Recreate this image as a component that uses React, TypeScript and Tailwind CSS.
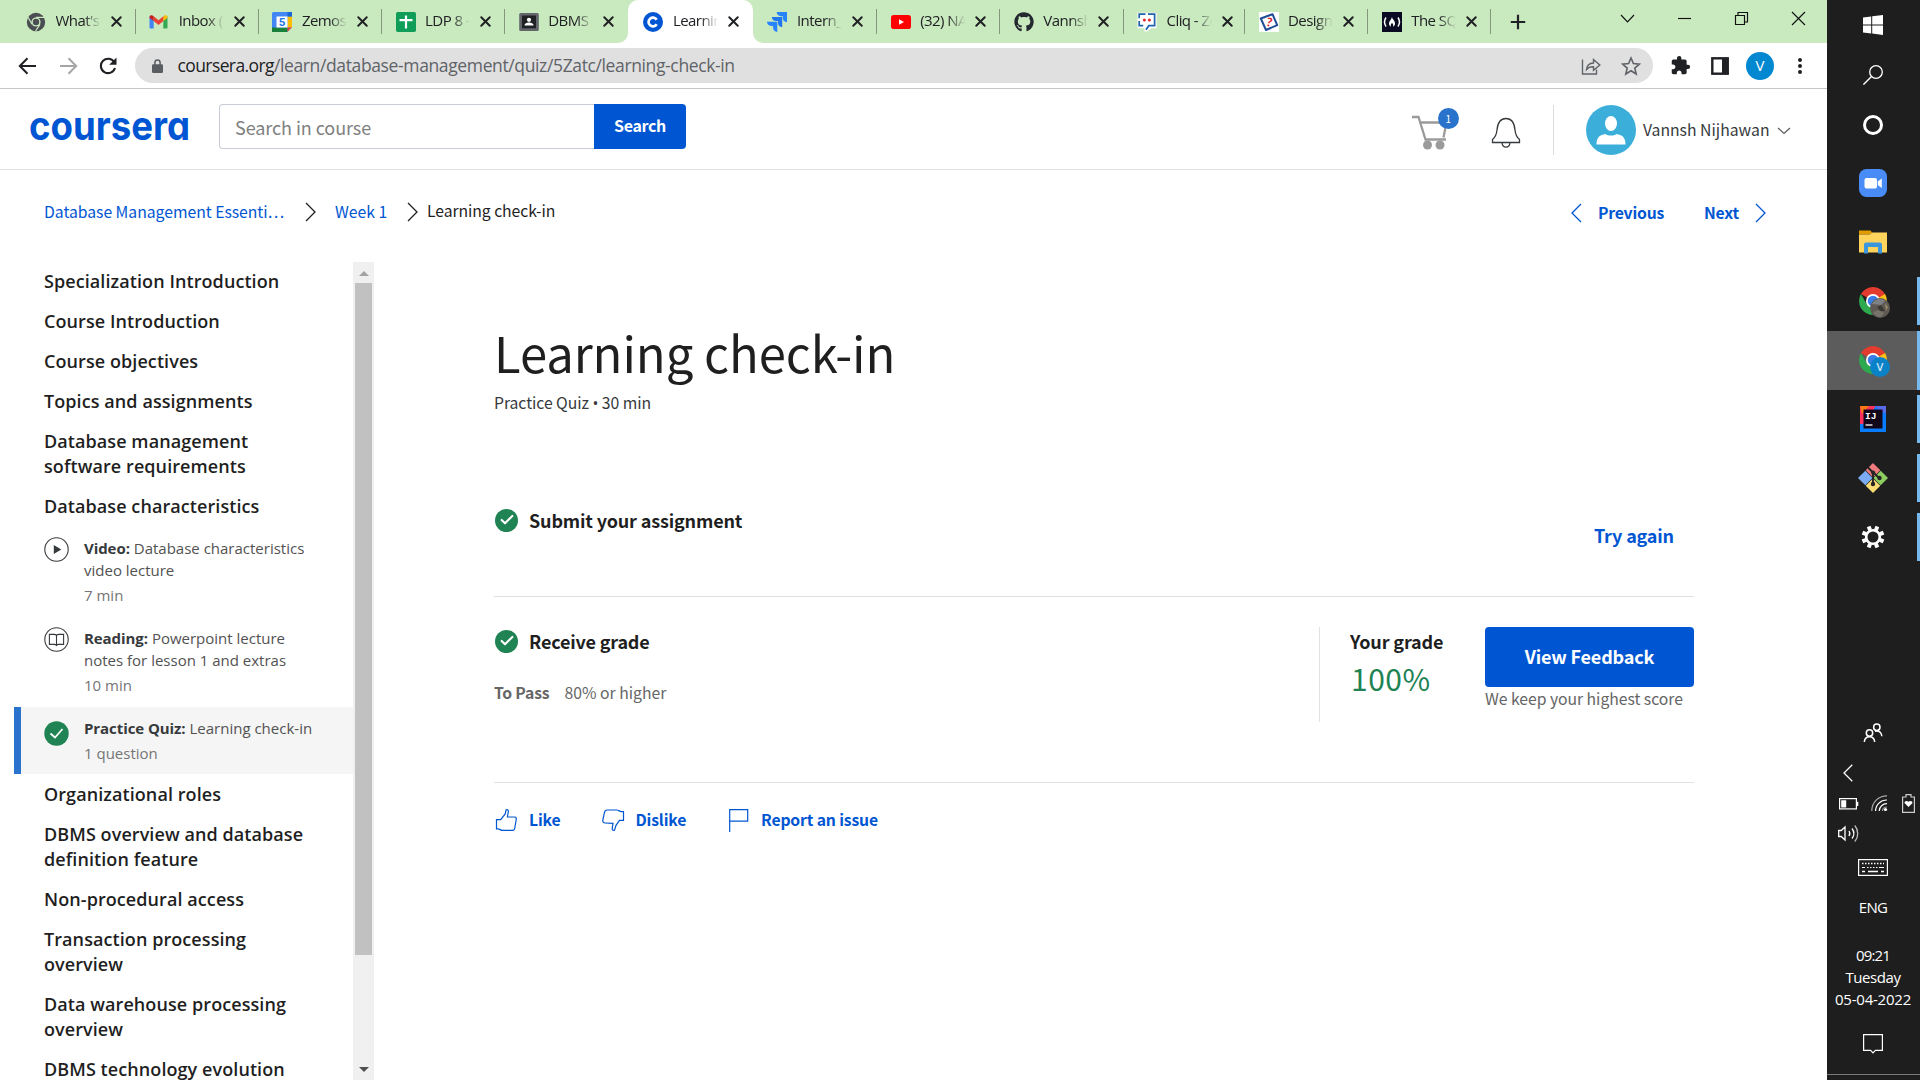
import React from "react";
import { X, Check } from "lucide-react";
import { FaGithub } from "react-icons/fa";
import { MdExtension } from "react-icons/md";

const SOURCE = "font-['Noto_Sans_CJK_SC',sans-serif]";
const SEGOE = "font-['Open_Sans',sans-serif]";

/* ---------- favicons ---------- */

function ChromeGrey() {
  return (
    <svg viewBox="0 0 20 20" className="size-5">
      <circle cx="10" cy="10" r="9.2" fill="#4a4d51" />
      <circle cx="10" cy="10" r="4.6" fill="#c9e9bf" />
      <circle cx="10" cy="10" r="3.2" fill="#4a4d51" />
      <path d="M10 5.4h8.2M6 12.3 2 5.3M14 12.3 9.6 19" stroke="#c9e9bf" strokeWidth="1.2" />
    </svg>
  );
}

function Gmail() {
  return (
    <svg viewBox="0 0 20 20" className="size-5">
      <path d="M.5 4.500v11.200c0 .5.4.8.8.8H4.700V8.600z" fill="#4285f4" />
      <path d="M18.500 4.500v11.200c0 .5-.4.8-.8.8h-3.400V8.600z" fill="#34a853" />
      <path d="M14.300 4.200v4.900l4.200-3.200V5c0-1.600-1.900-2.200-3-1.400z" fill="#fbbc04" />
      <path d="M4.700 9.100V4.200l4.800 4 4.800-4v4.900l-4.800 4z" fill="#ea4335" />
      <path d="M.5 5v.9l4.200 3.200V4.200l-1.200-.7C2.400 2.800.5 3.400.5 5z" fill="#c5221f" />
    </svg>
  );
}

function Calendar() {
  return (
    <svg viewBox="0 0 20 20" className="size-5">
      <rect width="20" height="20" rx="1.500" fill="#4285f4" />
      <rect x="15.500" y="4.500" width="4.500" height="11" fill="#fbbc04" />
      <rect x="0" y="15.500" width="15.500" height="4.500" fill="#188038" />
      <rect x="15.500" y="0" width="4.500" height="4.500" fill="#1967d2" />
      <path d="M15.500 15.500H20L15.500 20z" fill="#ea4335" />
      <path d="M20 15.500V20h-4.500z" fill="#c9e9bf" />
      <rect x="4.500" y="4.500" width="11" height="11" fill="#fff" />
      <text x="10" y="14.300" textAnchor="middle" fontSize="11.500" fontWeight="700" fill="#1a73e8" fontFamily="Roboto">5</text>
    </svg>
  );
}

function Sheets() {
  return (
    <svg viewBox="0 0 20 20" className="size-5">
      <rect width="20" height="20" rx="1.800" fill="#0f9d58" />
      <path d="M10 3.500v13M3.500 8.200h13" stroke="#fff" strokeWidth="2.200" />
    </svg>
  );
}

function Classroom() {
  return (
    <svg viewBox="0 0 20 20" className="size-5">
      <rect x=".2" y="1" width="19.600" height="18" rx="1.500" fill="#63666a" />
      <rect x="3" y="3.500" width="14" height="12.800" fill="#202124" />
      <circle cx="10" cy="7.800" r="2.100" fill="#fff" />
      <path d="M5.500 13.500c0-2.300 3-3 4.500-3s4.500.7 4.500 3z" fill="#fff" />
    </svg>
  );
}

function CourseraMark() {
  return (
    <svg viewBox="0 0 20 20" className="size-5">
      <circle cx="10" cy="10" r="10" fill="#0056d2" />
      <path d="M13.700 7.700A4.400 4.400 0 1 0 13.700 12.300" fill="none" stroke="#fff" strokeWidth="2.700" />
    </svg>
  );
}

function Jira() {
  return (
    <svg viewBox="0 0 20 20" className="size-5">
      <path d="M9.700 0H20v10.300c-2.300 0-4.200-1.900-4.200-4.200V4.200h-1.900C11.600 4.200 9.700 2.300 9.700 0z" fill="#2684ff" />
      <path d="M4.900 4.900h10.300v10.300c-2.300 0-4.200-1.900-4.200-4.200V9.100H9.100c-2.300 0-4.200-1.900-4.200-4.200z" fill="#1f76ee" />
      <path d="M0 9.700h10.300V20c-2.300 0-4.200-1.900-4.200-4.200v-1.900H4.200C1.900 13.900 0 12 0 9.700z" fill="#2684ff" />
    </svg>
  );
}

function YouTube() {
  return (
    <svg viewBox="0 0 20 20" className="size-5">
      <rect x="0" y="3" width="20" height="14" rx="2.800" fill="#f00" />
      <path d="M8 7.200v5.600l5-2.800z" fill="#fff" />
    </svg>
  );
}

function Cliq() {
  return (
    <svg viewBox="0 0 20 20" className="size-5">
      <path d="M.5.800h19v15.400h-5.300L10 19.500H7.500v-3.300h-7z" fill="#fff" />
      <path d="M8.500 2.200H2.200v4M2.200 9v4.700h4M11 2.200h6.600v11.500h-5.800L9 17.800" fill="none" stroke="#1d63b0" strokeWidth="1.700" />
      <circle cx="7.400" cy="8" r="1.500" fill="#e42527" />
      <circle cx="12.400" cy="8" r="1.500" fill="#e42527" />
    </svg>
  );
}

function DesignMark() {
  return (
    <svg viewBox="0 0 20 20" className="size-5">
      <rect width="20" height="20" fill="#fff" />
      <path d="M1.800 6.500 13.500 2.200 18.200 13.200 7 18z" fill="#fff" stroke="#1f4e96" strokeWidth="2" strokeLinejoin="round" />
      <text x="10.300" y="14.300" textAnchor="middle" fontSize="12" fontWeight="900" fill="#e01b2c" fontFamily="Lato" transform="rotate(12 10 10)">?</text>
    </svg>
  );
}

function FreeCodeCamp() {
  return (
    <svg viewBox="0 0 20 20" className="size-5">
      <rect width="20" height="20" fill="#0a0a23" />
      <path d="M4 5.500c-2 3-2 6 0 9M16 5.500c2 3 2 6 0 9" fill="none" stroke="#fff" strokeWidth="1.500" />
      <path d="M10 5c.3 2.500 3 3.500 3 6.500 0 1.700-1 2.800-2 3.200.6-1.300.2-2.700-1-3.700-1.200 1-1.600 2.400-1 3.700-1-.4-2-1.500-2-3.200C7 9 9.200 8 10 5z" fill="#fff" />
    </svg>
  );
}

const tabs: { title: string; icon: React.ReactNode; active?: boolean; narrow?: boolean }[] = [
  { title: "What's N", icon: <ChromeGrey /> },
  { title: "Inbox (1", icon: <Gmail /> },
  { title: "Zemoso", icon: <Calendar /> },
  { title: "LDP 8 - L", icon: <Sheets /> },
  { title: "DBMS", icon: <Classroom /> },
  { title: "Learning", icon: <CourseraMark />, active: true },
  { title: "Intern_S", icon: <Jira /> },
  { title: "(32) NAV", icon: <YouTube /> },
  { title: "Vannsh", icon: <FaGithub className="size-5 text-[#24292f]" /> },
  { title: "Cliq - Zo", icon: <Cliq />, narrow: true },
  { title: "Design", icon: <DesignMark /> },
  { title: "The SQL", icon: <FreeCodeCamp /> },
];

function TabStrip() {
  return (
    <div className="flex h-[43px] shrink-0 bg-[#c9e9bf] pl-[11.5px] text-[#202124]">
      {tabs.map((t, i) => {
        const sep = i > 0 && !t.active && !tabs[i - 1].active;
        return (
          <div
            key={t.title}
            className={
              "relative flex shrink-0 items-center " +
              (t.active ? "ml-px w-[124.500px] rounded-t-[10px] bg-white pl-[15px]" : t.narrow ? "w-[121.500px] pl-[14.500px]" : "w-[123.200px] pl-[14.500px]")
            }
          >
            {sep && <span className="absolute left-0 top-[9px] h-[25px] w-px bg-[#83977d]" />}
            {t.active && (
              <>
                <svg viewBox="0 0 10 10" className="absolute -left-[10px] bottom-0 size-[10px]"><path d="M10 0v10H0A10 10 0 0 0 10 0z" fill="#fff" /></svg>
                <svg viewBox="0 0 10 10" className="absolute -right-[10px] bottom-0 size-[10px]"><path d="M0 0v10h10A10 10 0 0 1 0 0z" fill="#fff" /></svg>
              </>
            )}
            <span className="size-5 shrink-0">{t.icon}</span>
            <span className="ml-[9.500px] w-[45px] overflow-hidden whitespace-nowrap pb-[3px] text-[15px] leading-[20px] tracking-[-0.550px] [mask-image:linear-gradient(to_right,black_62%,transparent)]">
              {t.title}
            </span>
            <X className="ml-[7px] size-[17px] shrink-0" strokeWidth={2.8} />
          </div>
        );
      })}
      <div className="flex items-center">
        <span className="h-[25px] w-px bg-[#83977d]" />
        <svg viewBox="0 0 16 16" className="ml-[19px] size-4"><path d="M8 .8v14.400M.8 8h14.400" stroke="#202124" strokeWidth="2.200" /></svg>
      </div>
      <div className="ml-auto flex h-[37px] items-center">
        {[
          "M1 4l6.500 7L14 4",
          "M1 7.500h13",
          "M1.500 4.500h9v9h-9zM4 4.500v-3h9.500v9.500h-3",
          "M1 1l13 13M14 1L1 14",
        ].map((d) => (
          <span key={d} className="flex w-[57px] justify-center">
            <svg viewBox="0 0 15 15" className="size-[15px]"><path d={d} fill="none" stroke="#111" strokeWidth="1.150" /></svg>
          </span>
        ))}
      </div>
    </div>
  );
}

function Toolbar() {
  return (
    <div className="flex h-[46px] shrink-0 items-center border-b border-[#c6c6c6] bg-white px-[18px] text-[#202124]">
      <svg viewBox="0 0 19 18" className="h-[18px] w-[19px]"><path d="M18 9H2M9.500 1.200 1.800 9l7.700 7.800" fill="none" stroke="#202124" strokeWidth="2" /></svg>
      <svg viewBox="0 0 19 18" className="ml-[22px] h-[18px] w-[19px]"><path d="M1 9h16M9.500 1.200 17.200 9l-7.700 7.800" fill="none" stroke="#a5a6a8" strokeWidth="2" /></svg>
      <svg viewBox="0 0 18 18" className="ml-[21px] size-[18px]"><path d="M15.300 5.200A7.200 7.200 0 1 0 16 11" fill="none" stroke="#202124" strokeWidth="2.100" /><path d="M17.500.5v7.300h-7.300z" fill="#202124" /></svg>
      <div className="ml-[18px] flex h-[35px] w-[1517.500px] items-center rounded-full bg-[#e0e0e0] pl-[17px] pr-[12px]">
        <svg viewBox="0 0 11 14" className="h-[14px] w-[11px]"><path d="M2.900 6V3.600a2.600 2.600 0 0 1 5.200 0V6" fill="none" stroke="#5a5d61" strokeWidth="1.500" /><rect y="5.200" width="11" height="8.800" rx="1.200" fill="#5a5d61" /></svg>
        <span className="ml-[14.500px] whitespace-nowrap pb-px text-[17.500px] leading-6 tracking-[-0.600px]">
          coursera.org<span className="tracking-[-0.370px] text-[#5f6368]">/learn/database-management/quiz/5Zatc/learning-check-in</span>
        </span>
        <svg viewBox="0 0 20 20" className="ml-auto size-5"><path d="M1.500 3.500V18h14v-4.500M1.500 5.500V3.500M5.500 13.500c.4-4.200 2.700-6.300 7-6.500V3.500L18.800 9l-6.300 5.300v-3.500c-3.200-.1-5.300.7-7 2.700z" fill="none" stroke="#5f6368" strokeWidth="1.400" /></svg>
        <svg viewBox="0 0 20 20" className="ml-[20px] size-5"><path d="m10 2 2.400 5.600 6 .5-4.600 4 1.400 5.900L10 14.800 4.800 18l1.400-5.900-4.600-4 6-.5z" fill="none" stroke="#5f6368" strokeWidth="1.600" /></svg>
      </div>
      <MdExtension className="ml-[17.500px] size-[21px]" />
      <svg viewBox="0 0 18 18" className="ml-[20px] size-[18px]"><rect x="1.300" y="1.300" width="15.400" height="15.400" fill="none" stroke="#202124" strokeWidth="2.400" /><rect x="11" y="1" width="6.500" height="16" fill="#202124" /></svg>
      <span className="ml-[17px] flex size-7 items-center justify-center rounded-full bg-[#0288d1] text-[15px] text-white">V</span>
      <svg viewBox="0 0 6 18" className="ml-auto mr-[6px] h-[18px] w-[6px]"><g fill="#202124"><circle cx="3" cy="3" r="2" /><circle cx="3" cy="9" r="2" /><circle cx="3" cy="15" r="2" /></g></svg>
    </div>
  );
}

function SiteHeader() {
  return (
    <header className="flex h-[81px] shrink-0 items-center border-b border-[#e1e1e1] pl-[29px]">
      <svg viewBox="0 0 162 46" className="h-[46px] w-[162px]" role="img" aria-label="coursera">
        <text x="0" y="34" textLength="161" lengthAdjust="spacingAndGlyphs" fontFamily="Inter" fontSize="40" fontWeight="700" fill="#0056d2" style={{ fontFeatureSettings: '"cv11"' }}>coursera</text>
      </svg>
      <div className="mb-[5px] ml-[28px] flex h-[45px]">
        <div className="flex w-[375px] items-center rounded-l-[4px] border border-r-0 border-[#c7ccd8] pl-[15px] text-[18px] leading-none tracking-[-0.080px] text-[#808080]">
          Search in course
        </div>
        <div className="flex w-[92px] items-center justify-center rounded-r-[4px] bg-[#0056d2] pb-[3px] text-[16px] font-bold leading-none tracking-[-0.330px] text-white">
          Search
        </div>
      </div>
      <div className="relative mb-[5px] ml-auto h-[46px] w-[38px]">
        <svg viewBox="0 0 38 46" className="h-full w-full">
          <path d="M0 13h6.500L13.500 35.500H34M8.500 18.500h26l-3 15" fill="none" stroke="#9b9b9b" strokeWidth="2.300" />
          <circle cx="15.500" cy="41" r="4.500" fill="#9b9b9b" /><circle cx="28" cy="41" r="4.500" fill="#9b9b9b" />
        </svg>
        <span className="absolute -right-[9px] top-[4px] flex size-[21px] items-center justify-center rounded-full bg-[#2a73cc] text-[10px] text-white">1</span>
      </div>
      <svg viewBox="0 0 30 32" className="ml-[41px] mt-[8px] h-8 w-[30px]"><path d="M1.500 25.500v-3c3-2.300 4-4.800 4.500-9.500C6.600 6 9 1.500 15 1.500S23.400 6 24 13c.5 4.700 1.500 7.200 4.500 9.500v3zM11 25.800c.3 2.800 1.800 4.400 4 4.400s3.700-1.600 4-4.400" fill="none" stroke="#373a3c" strokeWidth="1.300" /></svg>
      <span className="ml-[32px] mt-px h-[50px] w-px bg-[#dcdcdc]" />
      <svg viewBox="0 0 50 50" className="ml-[32px] mt-px size-[50px]">
        <circle cx="25" cy="25" r="25" fill="#3bafda" />
        <ellipse cx="25" cy="18.500" rx="6" ry="7.500" fill="#fff" />
        <path d="M10.500 39.500c0-7.500 3.500-9.500 9-10.500 2.500 2 8.500 2 11 0 5.500 1 9 3 9 10.500z" fill="#fff" />
      </svg>
      <span className="ml-[7px] mt-px text-[15.750px] leading-none text-[#373a3c]">Vannsh Nijhawan</span>
      <svg viewBox="0 0 14 8" className="ml-[7.500px] mr-[36px] mt-[3px] h-2 w-[14px]"><path d="m1 1 6 5.500L13 1" fill="none" stroke="#5a5a5a" strokeWidth="1.200" /></svg>
    </header>
  );
}

function Chevron({ flip, className }: { flip?: boolean; className: string }) {
  return (
    <svg viewBox="0 0 11 20" className={"h-5 w-[11px] " + className}>
      <path d={flip ? "M10 1 1 10l9 9" : "m1 1 9 9-9 9"} fill="none" stroke="currentColor" strokeWidth="1.300" />
    </svg>
  );
}

function Breadcrumbs() {
  return (
    <nav className="flex h-[92px] shrink-0 items-center pb-[9px] pl-11 text-[15.750px] leading-none text-[#1f1f1f]">
      <span className="w-[241px] whitespace-nowrap tracking-[-0.030px] text-[#0056d2]">Database Management Essenti…</span>
      <Chevron className="ml-[20px]" />
      <span className="ml-[19px] w-[53px] whitespace-nowrap text-[#0056d2]">Week 1</span>
      <Chevron className="ml-[19px]" />
      <span className="ml-[9px] whitespace-nowrap pb-[2px] tracking-[-0.070px]">Learning check-in</span>
      <div className="ml-auto flex items-center pr-[61.500px] pt-[2px] font-bold tracking-[-0.220px] text-[#0056d2]">
        <Chevron flip className="" />
        <span className="ml-[16px] w-[66px]">Previous</span>
        <span className="ml-[40px] w-[36px]">Next</span>
        <Chevron className="ml-[14.500px]" />
      </div>
    </nav>
  );
}

function Section({ children }: { children: React.ReactNode }) {
  return <div className="px-[30px] py-[7.500px] text-[18px] font-semibold leading-[25px] tracking-[0.080px] text-[#1f1f1f]">{children}</div>;
}

function Lesson({ icon, kind, name, meta, active }: { icon: React.ReactNode; kind: string; name: React.ReactNode; meta: string; active?: boolean }) {
  return (
    <div className={"flex border-l-[7px] pl-[23px] text-[15px] leading-[22px] " + (active ? "h-[67px] border-[#2a73cc] bg-[#f5f5f5] pt-[10px]" : "h-[90px] border-transparent pt-[11px]")}>
      <span className={"size-[25px] shrink-0 " + (active ? "mt-[4px]" : "")}>{icon}</span>
      <div className="ml-[15px]">
        <div className="whitespace-nowrap text-[#525252]"><b className="font-bold tracking-[-0.070px] text-[#373a3c]">{kind}:</b> {name}</div>
        <div className="pt-[3px] text-[#757575]">{meta}</div>
      </div>
    </div>
  );
}

function Sidebar() {
  return (
    <aside className="flex w-[374px] shrink-0">
      <div className={"ml-[14px] w-[339px] shrink-0 overflow-hidden " + SEGOE}>
        <div className="-mt-px mb-px h-[265px]">
          <Section>Specialization Introduction</Section>
          <Section>Course Introduction</Section>
          <Section>Course objectives</Section>
          <Section>Topics and assignments</Section>
          <Section>Database management<br />software requirements</Section>
          <Section>Database characteristics</Section>
        </div>
        <div className="-mt-px h-[181px]">
          <Lesson
            kind="Video"
            name={<>Database characteristics<br />video lecture</>}
            meta="7 min"
            icon={<svg viewBox="0 0 25 25" className="size-[25px]"><circle cx="12.500" cy="12.500" r="11.700" fill="none" stroke="#373a3c" strokeWidth="1.100" /><path d="M9.800 8v9l7.500-4.500z" fill="#373a3c" /></svg>}
          />
          <Lesson
            kind="Reading"
            name={<>Powerpoint lecture<br />notes for lesson 1 and extras</>}
            meta="10 min"
            icon={<svg viewBox="0 0 25 25" className="size-[25px]"><circle cx="12.500" cy="12.500" r="11.700" fill="none" stroke="#373a3c" strokeWidth="1.100" /><path d="M12.500 8.300c-.7-.8-1.500-.9-2.500-.9H5.400v10h5c1 0 1.600.3 2.100 1.100.5-.8 1.100-1.100 2.100-1.100h5v-10H15c-1 0-1.800.1-2.500.9zm0 0v10.200" fill="none" stroke="#373a3c" strokeWidth="1.100" /></svg>}
          />
        </div>
        <Lesson
          active
          kind="Practice Quiz"
          name="Learning check-in"
          meta="1 question"
          icon={<svg viewBox="0 0 25 25" className="size-[25px]"><circle cx="12.500" cy="12.500" r="12.200" fill="#1f8354" /><path d="m6.500 12.500 4.500 4 7.500-8.500" fill="none" stroke="#fff" strokeWidth="1.700" /></svg>}
        />
        <Section>Organizational roles</Section>
        <Section>DBMS overview and database<br />definition feature</Section>
        <Section>Non-procedural access</Section>
        <Section>Transaction processing<br />overview</Section>
        <Section>Data warehouse processing<br />overview</Section>
        <Section>DBMS technology evolution</Section>
      </div>
      <div className="flex w-[21px] shrink-0 flex-col items-center bg-[#f0f0f0]">
        <svg viewBox="0 0 10 5" className="mt-[9px] h-[5px] w-[10px] shrink-0"><path d="M5 0 10 5H0z" fill="#a3a3a3" /></svg>
        <span className="mt-[7px] h-[672px] w-[17px] shrink-0 bg-[#c1c1c1]" />
        <svg viewBox="0 0 10 5" className="mb-[8px] mt-auto h-[5px] w-[10px] shrink-0"><path d="M5 5 10 0H0z" fill="#505050" /></svg>
      </div>
    </aside>
  );
}

function Done() {
  return (
    <span className="ml-px flex size-[23px] items-center justify-center rounded-full bg-[#1f8354] text-white">
      <Check className="size-4" strokeWidth={3.2} />
    </span>
  );
}

function Main() {
  return (
    <main className="ml-[120px] w-[1200px]">
      <h1 className="mt-[65px] whitespace-nowrap text-[49px] leading-[50px] tracking-[-0.080px] text-[#1f1f1f]">Learning check-in</h1>
      <p className="mt-[14px] text-[15.750px] leading-6 tracking-[-0.050px] text-[#373a3c]">
        Practice Quiz <span className={SEGOE}>•</span> 30 min
      </p>
      <section className="mt-[89px] flex h-[93px] justify-between border-b border-[#e1e1e1]">
        <div className="flex h-8 items-center gap-[11px]">
          <Done />
          <h2 className="text-[18px] font-bold leading-8 tracking-[-0.160px] text-[#1f1f1f]">Submit your assignment</h2>
        </div>
        <button className="mt-px h-[60px] px-5 text-[18px] font-bold tracking-[-0.160px] text-[#0056d2]">Try again</button>
      </section>
      <section className="flex h-[186px] border-b border-[#e1e1e1] pt-[30px]">
        <div>
          <div className="flex h-[28px] items-center gap-[11px]">
            <Done />
            <h2 className="text-[18px] font-bold leading-[28px] tracking-[-0.180px] text-[#1f1f1f]">Receive grade</h2>
          </div>
          <div className="mt-[26px] flex text-[15.750px] leading-6 text-[#666]">
            <b className="w-[70.500px] tracking-[-0.200px]">To Pass</b>
            <span>80% or higher</span>
          </div>
        </div>
        <div className="ml-auto h-[95px] w-[166px] border-l border-[#e1e1e1] pl-[30px]">
          <h2 className="whitespace-nowrap text-[18px] font-bold leading-[28px] tracking-[-0.150px] text-[#1f1f1f]">Your grade</h2>
          <div className="mt-[3px] pl-px text-[30px] leading-10 tracking-[0.500px] text-[#1f8354]">100%</div>
        </div>
        <div className="w-[209px]">
          <button className="block h-[60px] w-full rounded-[4px] bg-[#0056d2] pb-[2px] text-[18px] font-bold leading-[58px] tracking-[-0.170px] text-white">View Feedback</button>
          <div className="mt-px whitespace-nowrap text-[15.750px] leading-[22px] tracking-[-0.040px] text-[#666]">We keep your highest score</div>
        </div>
      </section>
      <div className="mt-[25px] flex h-6 items-center text-[15.750px] font-bold leading-6 tracking-[-0.160px] text-[#0056d2]">
        <svg viewBox="0 0 24 24" className="size-6"><path d="M2.500 11.700h4.200l4.500-5.800.9-4.100c.8-.6 2.300 0 2.300 1.500l-1 5.700h7.300c1.100 0 1.800.9 1.600 2l-1.500 9c-.2 1.600-.9 2.400-2.300 2.400H8.600c-2 0-2.800-1.500-4.600-1.500H2.500z" fill="none" stroke="currentColor" strokeWidth="1.200" /></svg>
        <span className="ml-[11px] w-[31px]">Like</span>
        <svg viewBox="0 0 24 24" className="ml-[41px] size-6"><path d="M22.500 12.300h-4l-3.500 5-1.500 4.800c-.8.8-2.500 0-2.300-1.400l.8-5.400-7.800-.3c-1.800 0-2.700-1.300-2.400-2.900L3.500 4.300c.4-1.800 1.300-2.300 2.700-2.300h9.200c2.500 0 3 1.600 5 1.600h2.100z" fill="none" stroke="currentColor" strokeWidth="1.200" /></svg>
        <span className="ml-[10.500px] w-[51px]">Dislike</span>
        <svg viewBox="0 0 24 24" className="ml-[38px] size-6"><path d="M4.700 24V1.700h18v11.500h-18" fill="none" stroke="currentColor" strokeWidth="1.200" /></svg>
        <span className="ml-[12.500px] whitespace-nowrap">Report an issue</span>
      </div>
    </main>
  );
}

/* ---------- taskbar ---------- */

function ChromeColor({ badge }: { badge: React.ReactNode }) {
  return (
    <svg viewBox="0 0 32 32" className="ml-[4px] mt-[4px] size-8">
      <path d="M14 7h12.100A14 14 0 0 1 14 28l6-10.500z" fill="#fbc116" />
      <path d="M14 14 1.900 7A14 14 0 0 1 26.100 7z" fill="#e33b2e" />
      <path d="M1.900 7A14 14 0 0 0 14 28l6-10.500-12 0z" fill="#2da94f" />
      <circle cx="14" cy="14" r="7" fill="#fff" />
      <circle cx="14" cy="14" r="5.300" fill="#3b7de8" />
      {badge}
    </svg>
  );
}

const apps: { name: string; icon: React.ReactNode; open?: boolean; active?: boolean }[] = [
  {
    name: "zoom",
    icon: (
      <svg viewBox="0 0 28 28" className="size-7">
        <rect width="28" height="28" rx="7.500" fill="#4a8cf7" />
        <rect x="5.500" y="9" width="12.500" height="10.500" rx="2" fill="#fff" />
        <path d="m18.800 12.500 4-3v9.500l-4-3z" fill="#fff" />
      </svg>
    ),
  },
  {
    name: "files",
    icon: (
      <svg viewBox="0 0 28 24" className="h-6 w-7">
        <path d="M0 .5h11.500l1.500 2-1.500 2H0z" fill="#e09b00" />
        <path d="M0 4.500h11l2-2h15v20H0z" fill="#ffd35c" />
        <path d="M5 23.500V14.500c0-1 .8-2 2-2h14c1.200 0 2 1 2 2v9h-4v-6.500H9v6.500z" fill="#3a96dd" />
      </svg>
    ),
  },
  {
    name: "chrome-one",
    open: true,
    icon: <ChromeColor badge={<g><circle cx="21" cy="21" r="10" fill="#5f5b54" /><path d="M13 17c2-4 8-7 13-3l-4 4z" fill="#7d8084" /><path d="M14 25l6-2 5 3-3 4c-3 .5-6-1-8-5z" fill="#77736a" /><path d="m18 20 4-2 4 6-5 0z" fill="#3a3832" /><path d="m26 16 3 4-2 4z" fill="#9a8a66" /></g>} />,
  },
  {
    name: "chrome-two",
    open: true,
    active: true,
    icon: <ChromeColor badge={<g><circle cx="21" cy="21" r="10" fill="#0a82c8" /><text x="21" y="25" textAnchor="middle" fontSize="11" fontWeight="600" fill="#cfe8f7" fontFamily="Open Sans">V</text></g>} />,
  },
  {
    name: "idea",
    open: true,
    icon: (
      <svg viewBox="0 0 26 26" className="size-[26px]">
        <rect width="26" height="26" fill="#087cfa" />
        <path d="M0 0h16L3 18H0z" fill="#fe315d" />
        <path d="M0 0h9L2 8z" fill="#f97a12" />
        <path d="M14 0h12v8z" fill="#5a6be8" />
        <rect x="3.500" y="3.500" width="19" height="19" fill="#12061a" />
        <text x="5" y="13.200" fontSize="9.500" fontWeight="700" fill="#fff" fontFamily="Liberation Mono">IJ</text>
        <path d="M5.500 19h7" stroke="#fff" strokeWidth="1.300" />
      </svg>
    ),
  },
  {
    name: "git",
    open: true,
    icon: (
      <svg viewBox="0 0 30 30" className="size-[30px]">
        <path d="m15 0 7.300 7.300-7.300 7.300-7.300-7.300z" fill="#f07a7c" />
        <path d="m22.700 7.700 7.300 7.300-7.300 7.300-7.300-7.300z" fill="#8ccf60" />
        <path d="m7.300 7.700 7.300 7.300-7.300 7.300L0 15z" fill="#7cabf5" />
        <path d="m15 15.400 7.300 7.300L15 30l-7.300-7.300z" fill="#fbdc72" />
        <path d="m10 4.500 5 5V21M15 9l6 6" fill="none" stroke="#252525" strokeWidth="1.900" />
        <circle cx="15" cy="9.500" r="2" fill="#252525" /><circle cx="15" cy="21" r="2.200" fill="#252525" /><circle cx="21.500" cy="15" r="2.200" fill="#252525" />
      </svg>
    ),
  },
  {
    name: "settings",
    open: true,
    icon: (
      <svg viewBox="0 0 24 24" className="size-6">
        <circle cx="12" cy="12" r="6.800" fill="none" stroke="#fff" strokeWidth="2.600" />
        {[22.5, 67.5, 112.5, 157.5, 202.5, 247.5, 292.5, 337.5].map((a) => (
          <rect key={a} x="10" y=".6" width="4" height="4" fill="#fff" transform={`rotate(${a} 12 12)`} />
        ))}
      </svg>
    ),
  },
];

function Taskbar() {
  return (
    <aside className="flex w-[93px] shrink-0 flex-col bg-[#1e1e1e] text-white">
      <div className="flex h-[50px] items-center justify-center pr-px">
        <svg viewBox="0 0 20 20" className="size-5"><path d="M0 2.600 8.200 1.500v8H0zM9.200 1.300 20 0v9.500H9.200zM0 10.500h8.200v8L0 17.400zM9.200 10.500H20V20L9.200 18.600z" fill="#fff" /></svg>
      </div>
      <div className="flex h-[50px] items-center justify-center pr-px">
        <svg viewBox="0 0 20 20" className="size-5"><circle cx="13" cy="7" r="6.300" fill="none" stroke="#fff" strokeWidth="1.300" /><path d="M8.500 11.500.4 19.600" stroke="#fff" strokeWidth="1.400" /></svg>
      </div>
      <div className="flex h-[50px] items-center justify-center pr-px">
        <span className="size-[20px] rounded-full border-[3px] border-white" />
      </div>
      <div className="mt-[4px] flex flex-col">
        {apps.map((a) => (
          <div key={a.name} className={"flex h-[59px] items-center " + (a.active ? "bg-[#5c5c5c]" : "")}>
            <span className="flex flex-1 justify-center pb-[2px] pl-[2px]">{a.icon}</span>
            <span className={"w-[3px] " + (a.active ? "h-[59px] bg-[#76b9ed]" : a.open ? "mb-[2px] h-12 bg-[#76b9ed]" : "")} />
          </div>
        ))}
      </div>
      <div className="mt-[156px] flex h-5 justify-center pr-px">
        <svg viewBox="0 0 20 20" className="size-5"><g fill="none" stroke="#fff" strokeWidth="1.500"><circle cx="6.500" cy="10" r="3.200" /><path d="M1.300 19c.3-3.300 2.200-5.300 5.200-5.300s4.900 2 5.200 5.300" /><circle cx="13.800" cy="4.300" r="3.200" /><path d="M12 8.200c3.800-1 6.500 1 6.900 5" /></g></svg>
      </div>
      <div className="mt-[21px] flex pl-[16px]">
        <svg viewBox="0 0 10 18" className="h-[18px] w-[10px]"><path d="M9.300.8 1 9l8.300 8.200" fill="none" stroke="#fff" strokeWidth="1.300" /></svg>
      </div>
      <div className="mt-[11px] flex h-5 items-center pl-3">
        <svg viewBox="0 0 20 12" className="mt-px h-3 w-5 shrink-0"><rect x=".6" y=".6" width="16.800" height="10.300" fill="none" stroke="#fff" strokeWidth="1.200" /><path d="M2.200 2.200h5v7.200h-5zM18 3.700h1.300V8H18z" fill="#fff" /></svg>
        <svg viewBox="0 0 17 17" className="ml-[12px] mt-px size-[17px] shrink-0"><g fill="none" strokeWidth="1.200"><path d="M.8 16A15 15 0 0 1 16 .8" stroke="#aaa" /><path d="M4.600 16A11 11 0 0 1 16 5" stroke="#fff" /><path d="M8.200 16A7.500 7.500 0 0 1 16 8.700" stroke="#fff" /><path d="M11.500 16c0-2.300 1.700-4 4.500-4" stroke="#999" /></g><circle cx="14.500" cy="14.500" r="1.600" fill="#fff" /></svg>
        <svg viewBox="0 0 13 19" className="ml-[13.500px] h-[19px] w-[13px] shrink-0"><path d="M.6 3h3.400V.6h5V3h3.400v15.400H.6z" fill="none" stroke="#ccc" strokeWidth="1.200" /><path d="M6.500 13 2.700 9.300C1.800 7.500 4.500 5.800 6.500 7.800 8.500 5.800 11.200 7.500 10.300 9.300z" fill="#fff" /></svg>
      </div>
      <div className="mt-[11px] flex pl-[11px]">
        <svg viewBox="0 0 21 19" className="h-[19px] w-[21px]"><g fill="none" stroke="#fff" strokeWidth="1.300"><path d="M.7 6.500h2.500L7 3v13l-3.800-3.500H.7z" /><path d="M11 7c1 1.500 1 3.500 0 5" /><path d="M14 4.500c2.300 3 2.300 7 0 10" /><path d="M16.800 1.500c3.900 4.500 3.900 11.500 0 16" stroke="#bbb" /></g></svg>
      </div>
      <div className="mt-[16px] flex justify-center pr-px">
        <svg viewBox="0 0 30 17" className="h-[17px] w-[30px]"><rect x=".6" y=".6" width="28.800" height="15.800" fill="none" stroke="#fff" strokeWidth="1.200" /><path d="M4 4.500h22" stroke="#fff" strokeWidth="1.300" strokeDasharray="1.500 1.500" /><path d="M4 8.500h3m2 0h1.500m1.500 0h1.500m1.500 0h1.500m1.500 0h1.500m1.500 0H26" stroke="#fff" strokeWidth="1.200" /><path d="M4 12.500h3m3 0h10m3 0h3" stroke="#fff" strokeWidth="1.300" /></svg>
      </div>
      <div className="mt-[20px] pr-px text-center text-[15px] leading-[22px] tracking-[-0.700px]">ENG</div>
      <div className="mt-[26px] pr-px text-center text-[15px] leading-[22px]">
        <div className="tracking-[-0.850px]">09:21</div>
        <div className="tracking-[-0.450px]">Tuesday</div>
        <div className="tracking-[-0.230px]">05-04-2022</div>
      </div>
      <div className="mt-[24px] flex justify-center pr-px">
        <svg viewBox="0 0 20 20" className="size-5"><path d="M.6.6h18.800v15.800h-7L10 18.800l-2.400-2.400h-7z" fill="none" stroke="#fff" strokeWidth="1.200" /></svg>
      </div>
      <div className="mt-auto h-[6px] border-t border-[#7a7a7a]" />
    </aside>
  );
}

export default function App() {
  return (
    <div className={"flex h-[1080px] w-[1920px] overflow-hidden bg-white " + SEGOE}>
      <div className="flex w-[1827px] flex-col">
        <TabStrip />
        <Toolbar />
        <div className={"flex min-h-0 flex-1 flex-col " + SOURCE}>
          <SiteHeader />
          <Breadcrumbs />
          <div className="flex min-h-0 flex-1 overflow-hidden">
            <Sidebar />
            <Main />
          </div>
        </div>
      </div>
      <Taskbar />
    </div>
  );
}
